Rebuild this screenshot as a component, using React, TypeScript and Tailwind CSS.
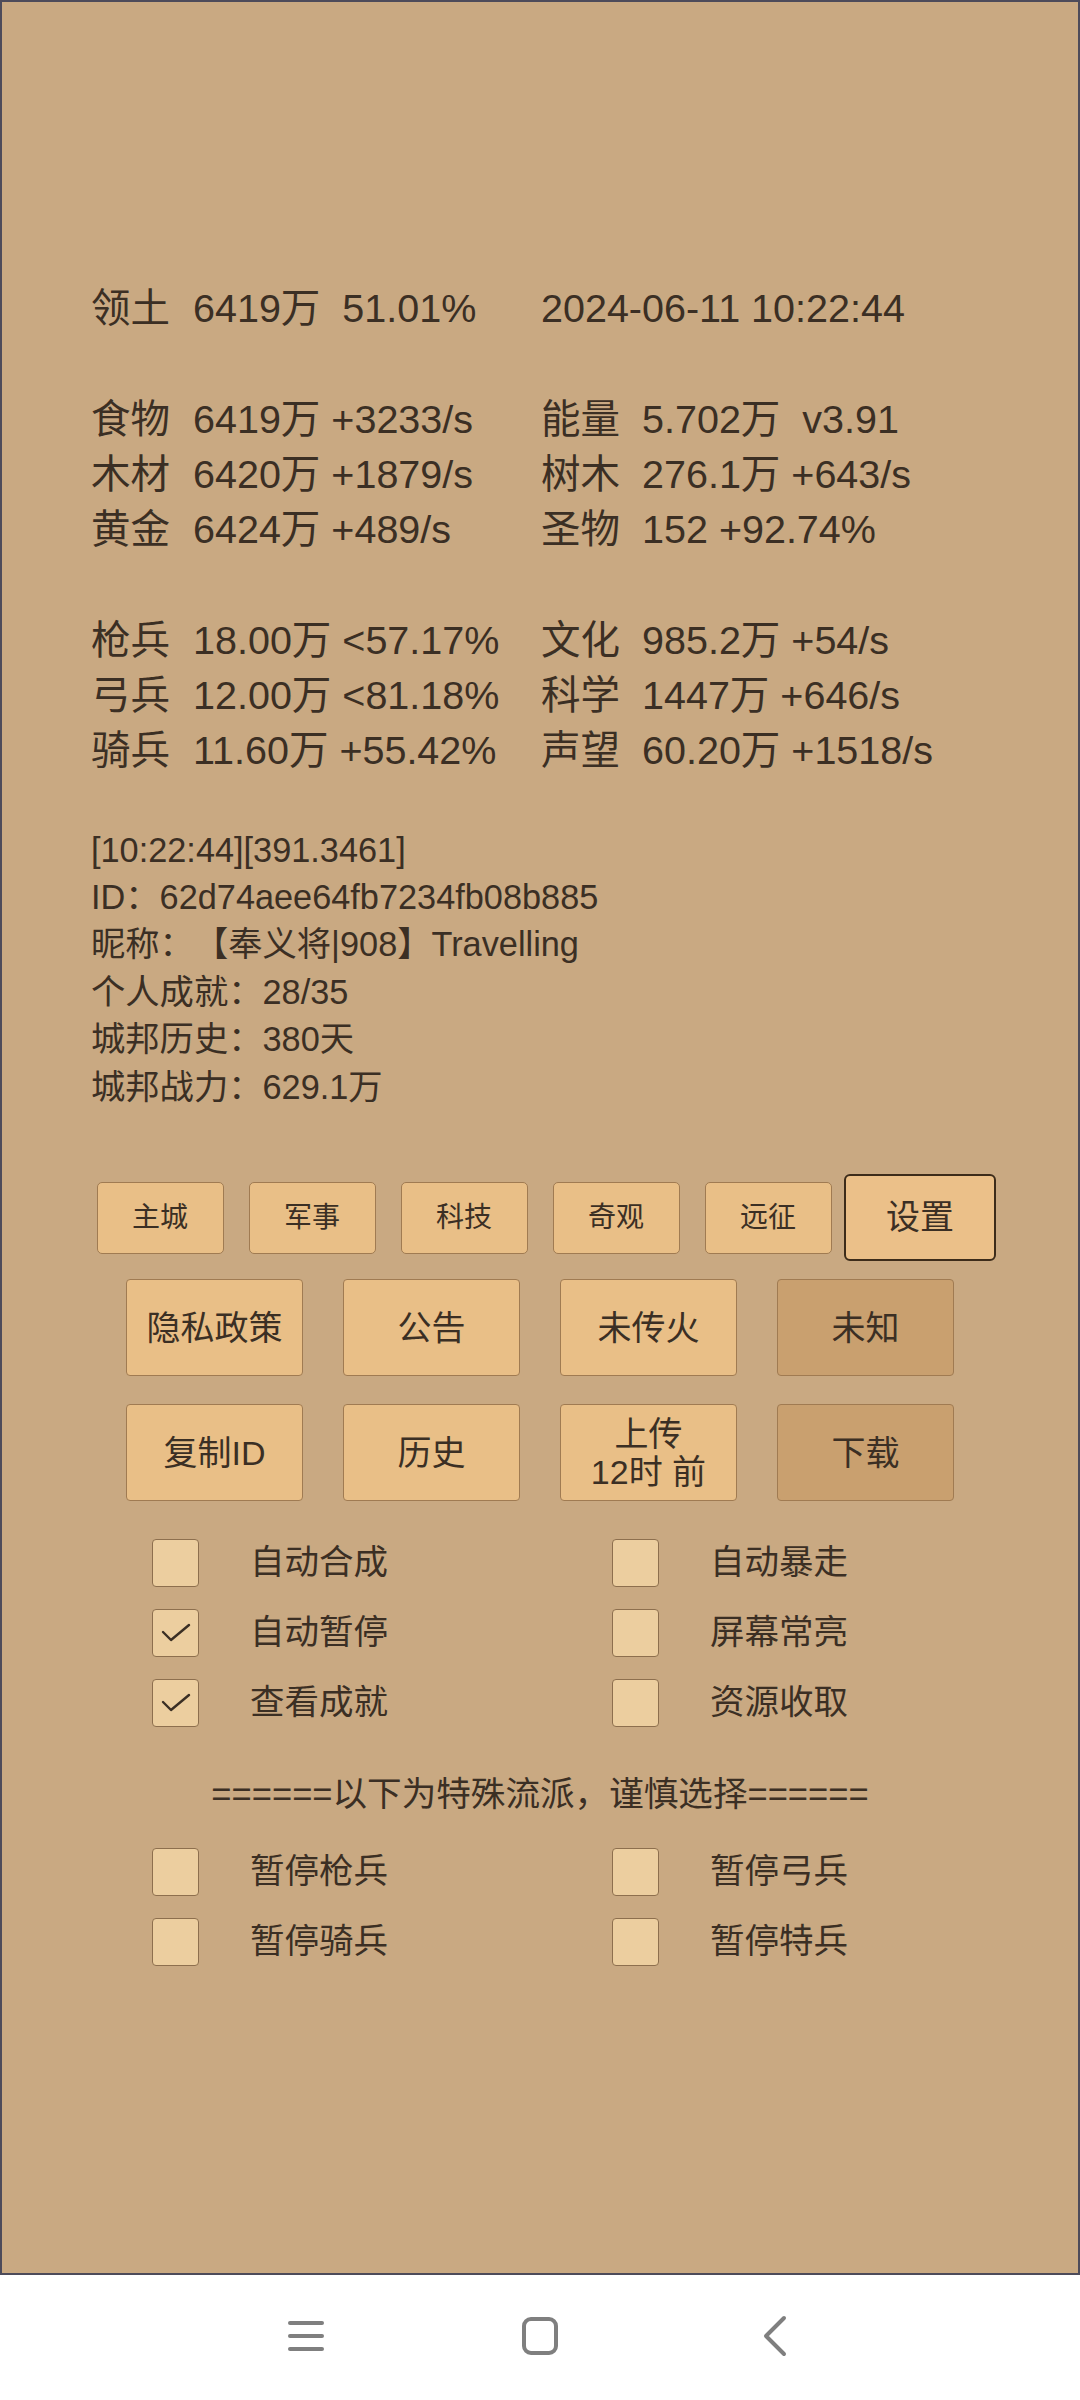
const font = "font-['Liberation_Sans','Noto_Sans_CJK_SC',sans-serif]";

const stats: [string, string, string, string][] = [
  ["领土", "6419万  51.01%", "", "2024-06-11 10:22:44"],
  ["", "", "", ""],
  ["食物", "6419万 +3233/s", "能量", "5.702万  v3.91"],
  ["木材", "6420万 +1879/s", "树木", "276.1万 +643/s"],
  ["黄金", "6424万 +489/s", "圣物", "152 +92.74%"],
  ["", "", "", ""],
  ["枪兵", "18.00万 <57.17%", "文化", "985.2万 +54/s"],
  ["弓兵", "12.00万 <81.18%", "科学", "1447万 +646/s"],
  ["骑兵", "11.60万 +55.42%", "声望", "60.20万 +1518/s"],
];

const info = [
  "[10:22:44][391.3461]",
  "ID：62d74aee64fb7234fb08b885",
  "昵称：【奉义将|908】Travelling",
  "个人成就：28/35",
  "城邦历史：380天",
  "城邦战力：629.1万",
];

const Box = ({ label, checked }: { label: string; checked?: boolean }) => (
  <div className="flex items-center h-[48px]">
    <div className="w-[47px] h-[48px] rounded-[4px] border border-[#8d6f4e] bg-[#ecce9f] flex items-center justify-center">
      {checked && (
        <svg width="30" height="20" viewBox="0 0 30 20">
          <polyline points="2,9 10,17 28,2" fill="none" stroke="#3b2f24" strokeWidth="2.4" strokeLinecap="round" strokeLinejoin="round" />
        </svg>
      )}
    </div>
    <span className="ml-[51px] text-[34.5px]">{label}</span>
  </div>
);

const BigBtn = ({ children, dark }: { children: React.ReactNode; dark?: boolean }) => (
  <button
    className={`w-[177px] h-[97px] rounded-[4px] border border-[#a07b52] text-[34px] leading-[38px] text-[#3b2f24] ${
      dark ? "bg-[#c9a06f]" : "bg-[#e9bf87]"
    }`}
  >
    {children}
  </button>
);

export default function App() {
  return (
    <div className={`w-[1080px] h-[2400px] flex flex-col text-[#3b2f24] [text-spacing-trim:space-all] ${font}`}>
      <div className="h-[2275px] border-2 border-[#4d4b5a] bg-[#c9a982] pt-[279px]">
        {/* stats */}
        <div className="pl-[89px] text-[39.5px] leading-[55.3px]">
          {stats.map((r, i) => (
            <div key={i} className="h-[55.3px] flex">
              <div className="w-[450px] flex">
                <span className="w-[102px]">{r[0]}</span>
                <span className="whitespace-pre">{r[1]}</span>
              </div>
              <div className="flex">
                {r[2] && <span className="w-[101px]">{r[2]}</span>}
                <span className="whitespace-pre">{r[3]}</span>
              </div>
            </div>
          ))}
        </div>

        {/* info */}
        <div className="pl-[89px] mt-[48px] text-[34.3px] leading-[47.4px]">
          {info.map((t) => (
            <div key={t}>{t}</div>
          ))}
        </div>

        {/* tabs */}
        <div className="mt-[63px] h-[87px] flex items-center justify-center gap-[25px]">
          {["主城", "军事", "科技", "奇观", "远征"].map((t) => (
            <button
              key={t}
              className="w-[127px] h-[72px] rounded-[5px] border border-[#a07b52] bg-[#e9bf87] text-[28px]"
            >
              {t}
            </button>
          ))}
          <button className="w-[152px] h-[87px] -mx-[12.5px] rounded-[6px] border-2 border-[#3d2c1a] bg-[#ebc089] text-[34px]">
            设置
          </button>
        </div>

        <div className="mt-[18px] flex justify-center gap-[40px]">
          <BigBtn>隐私政策</BigBtn>
          <BigBtn>公告</BigBtn>
          <BigBtn>未传火</BigBtn>
          <BigBtn dark>未知</BigBtn>
        </div>
        <div className="mt-[28px] flex justify-center gap-[40px]">
          <BigBtn>复制ID</BigBtn>
          <BigBtn>历史</BigBtn>
          <BigBtn>
            上传
            <br />
            12时 前
          </BigBtn>
          <BigBtn dark>下载</BigBtn>
        </div>

        {/* options */}
        <div className="mt-[38px] pl-[150px] grid grid-cols-[460px_auto] gap-y-[22px]">
          <Box label="自动合成" />
          <Box label="自动暴走" />
          <Box label="自动暂停" checked />
          <Box label="屏幕常亮" />
          <Box label="查看成就" checked />
          <Box label="资源收取" />
        </div>

        <div className="mt-[44px] text-center text-[34.6px] leading-[47px]">
          ======以下为特殊流派，谨慎选择======
        </div>

        <div className="mt-[30px] pl-[150px] grid grid-cols-[460px_auto] gap-y-[22px]">
          <Box label="暂停枪兵" />
          <Box label="暂停弓兵" />
          <Box label="暂停骑兵" />
          <Box label="暂停特兵" />
        </div>
      </div>

      {/* nav bar */}
      <div className="h-[125px] bg-white flex items-center justify-center gap-[174px] pb-[4px]">
        <div className="w-[60px] flex justify-center">
          <svg width="38" height="34" viewBox="0 0 38 34">
            <g stroke="#7f7f7f" strokeWidth="4" strokeLinecap="round">
              <line x1="3" y1="4" x2="35" y2="4" />
              <line x1="3" y1="17" x2="35" y2="17" />
              <line x1="3" y1="30" x2="35" y2="30" />
            </g>
          </svg>
        </div>
        <div className="w-[60px] flex justify-center">
          <svg width="40" height="40" viewBox="0 0 40 40">
            <rect x="4" y="3" width="32" height="34" rx="7" fill="none" stroke="#7f7f7f" strokeWidth="4" />
          </svg>
        </div>
        <div className="w-[60px] flex justify-center">
          <svg width="28" height="42" viewBox="0 0 28 42">
            <polyline points="24,3 6,21 24,39" fill="none" stroke="#7f7f7f" strokeWidth="4" strokeLinecap="round" strokeLinejoin="round" />
          </svg>
        </div>
      </div>
    </div>
  );
}
